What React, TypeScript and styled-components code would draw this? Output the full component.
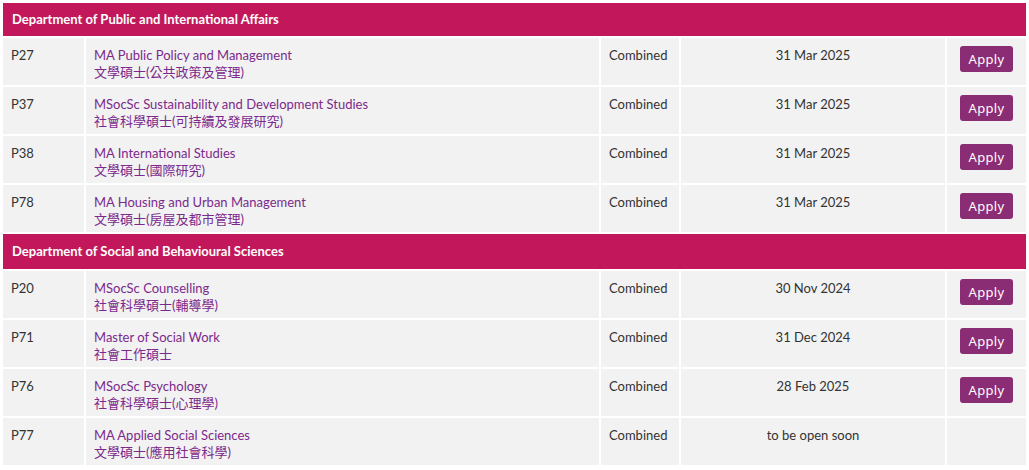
import React from "react";
import styled, { createGlobalStyle } from "styled-components";

const GlobalStyle = createGlobalStyle`
  body {
    margin: 0;
    background: #ffffff;
    font-family: Lato, "Noto Sans CJK TC", sans-serif;
  }
`;

type Programme = {
  code: string;
  en: string;
  zh: string;
  mode: string;
  deadline: string;
  open: boolean;
};

type Department = {
  name: string;
  programmes: Programme[];
};

const departments: Department[] = [
  {
    name: "Department of Public and International Affairs",
    programmes: [
      { code: "P27", en: "MA Public Policy and Management", zh: "文學碩士(公共政策及管理)", mode: "Combined", deadline: "31 Mar 2025", open: true },
      { code: "P37", en: "MSocSc Sustainability and Development Studies", zh: "社會科學碩士(可持續及發展研究)", mode: "Combined", deadline: "31 Mar 2025", open: true },
      { code: "P38", en: "MA International Studies", zh: "文學碩士(國際研究)", mode: "Combined", deadline: "31 Mar 2025", open: true },
      { code: "P78", en: "MA Housing and Urban Management", zh: "文學碩士(房屋及都市管理)", mode: "Combined", deadline: "31 Mar 2025", open: true },
    ],
  },
  {
    name: "Department of Social and Behavioural Sciences",
    programmes: [
      { code: "P20", en: "MSocSc Counselling", zh: "社會科學碩士(輔導學)", mode: "Combined", deadline: "30 Nov 2024", open: true },
      { code: "P71", en: "Master of Social Work", zh: "社會工作碩士", mode: "Combined", deadline: "31 Dec 2024", open: true },
      { code: "P76", en: "MSocSc Psychology", zh: "社會科學碩士(心理學)", mode: "Combined", deadline: "28 Feb 2025", open: true },
      { code: "P77", en: "MA Applied Social Sciences", zh: "文學碩士(應用社會科學)", mode: "Combined", deadline: "to be open soon", open: false },
    ],
  },
];

const Wrapper = styled.div`
  padding: 1px;
`;

const Table = styled.table`
  width: 100%;
  table-layout: fixed;
  border-collapse: separate;
  border-spacing: 2px;
  font-size: 13px;
  line-height: 17px;
  color: #333333;
`;

const DeptCell = styled.td<{ $first?: boolean }>`
  background: #c2185b;
  color: #ffffff;
  font-weight: 700;
  height: ${({ $first }) => ($first ? "33px" : "35px")};
  padding: 0 9px;
  vertical-align: middle;
`;

const Cell = styled.td<{ $align?: "left" | "center" }>`
  background: #f2f2f2;
  height: 47px;
  padding: 9px 8px 0 8px;
  vertical-align: top;
  text-align: ${({ $align }) => $align ?? "left"};
  box-sizing: border-box;
`;

const ActionCell = styled(Cell)`
  padding-top: 8px;
  text-align: center;
`;

const NameLink = styled.a`
  display: block;
  color: #7b2a8c;
  text-decoration: none;
`;

const ApplyButton = styled.button`
  background: #8b2d75;
  color: #ffffff;
  border: none;
  border-radius: 3px;
  width: 53px;
  height: 26px;
  padding: 0;
  font-family: "Noto Sans", sans-serif;
  font-size: 13px;
  letter-spacing: 0.3px;
  cursor: pointer;
`;

export default function App() {
  return (
    <Wrapper>
      <GlobalStyle />
      <Table>
        <colgroup>
          <col style={{ width: 81 }} />
          <col style={{ width: 513 }} />
          <col style={{ width: 78 }} />
          <col style={{ width: 264 }} />
          <col />
        </colgroup>
        <tbody>
          {departments.map((dept, i) => (
            <React.Fragment key={dept.name}>
              <tr>
                <DeptCell colSpan={5} $first={i === 0}>
                  {dept.name}
                </DeptCell>
              </tr>
              {dept.programmes.map((p) => (
                <tr key={p.code}>
                  <Cell>{p.code}</Cell>
                  <Cell>
                    <NameLink href="#">{p.en}</NameLink>
                    <NameLink href="#">{p.zh}</NameLink>
                  </Cell>
                  <Cell>{p.mode}</Cell>
                  <Cell $align="center">{p.deadline}</Cell>
                  <ActionCell>{p.open && <ApplyButton>Apply</ApplyButton>}</ActionCell>
                </tr>
              ))}
            </React.Fragment>
          ))}
        </tbody>
      </Table>
    </Wrapper>
  );
}
